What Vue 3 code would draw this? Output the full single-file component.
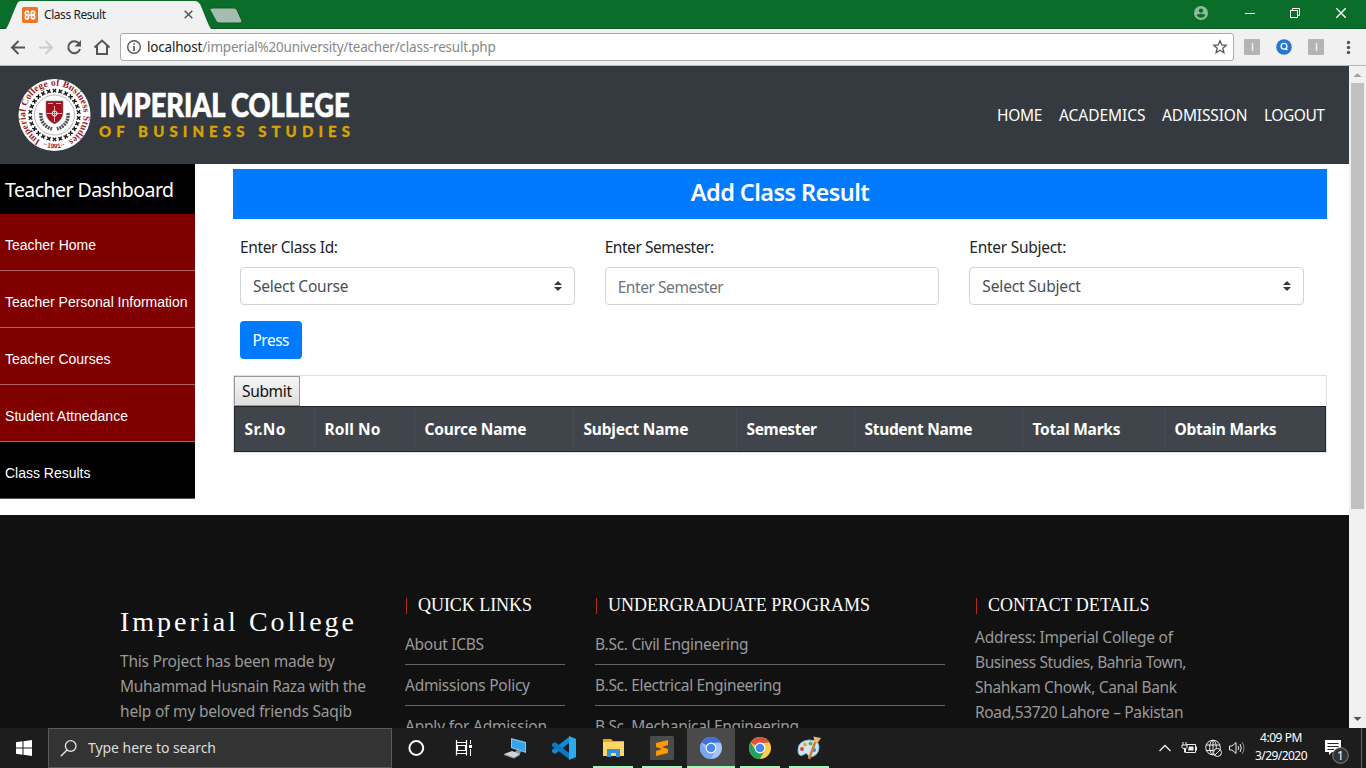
<script setup>
// Spreads or tightens letter spacing so a label takes the given width.
const vFit = {
  mounted(el, { value }) {
    const range = document.createRange()
    range.selectNodeContents(el)
    const w = range.getBoundingClientRect().width
    const n = el.textContent.trim().length
    el.style.letterSpacing = (value - w) / (n - 1) + 'px'
  },
}
const nav = [['HOME', 45.5], ['ACADEMICS', 86.5], ['ADMISSION', 85.5], ['LOGOUT', 61]]
const side = [
  ['Teacher Home', 91], ['Teacher Personal Information', 182.5],
  ['Teacher Courses', 105.5], ['Student Attnedance', 123], ['Class Results', 85.5],
]
const fields = [
  { label: 'Enter Class Id:', lw: 98, text: 'Select Course', tw: 95.5, select: true },
  { label: 'Enter Semester:', lw: 109.5, text: 'Enter Semester', tw: 106, select: false },
  { label: 'Enter Subject:', lw: 97, text: 'Select Subject', tw: 98.5, select: true },
]
const cols = [
  ['Sr.No', 80, 41], ['Roll No', 100, 56], ['Cource Name', 159, 102], ['Subject Name', 163, 105],
  ['Semester', 118, 70.5], ['Student Name', 168, 108], ['Total Marks', 142, 88], ['Obtain Marks', 162, 102],
]
const about = [
  ['This Project has been made by', 215], ['Muhammad Husnain Raza with the', 246],
  ['help of my beloved friends Saqib', 232],
]
const quick = [['About ICBS', 79], ['Admissions Policy', 125], ['Apply for Admission', 142]]
const programs = [
  ['B.Sc. Civil Engineering', 153.5], ['B.Sc. Electrical Engineering', 186.5], ['B.Sc. Mechanical Engineering', 204],
]
const contact = [
  ['Address: Imperial College of', 198], ['Business Studies, Bahria Town,', 211.5],
  ['Shahkam Chowk, Canal Bank', 202], ['Road,53720 Lahore – Pakistan', 208.5],
]
</script>

<template>
  <div class="screen">
    <div class="tabs">
      <svg class="tabshape" width="250" height="29">
        <path d="M6 29C9 25 14 10 17 4Q18 1 21 1H195Q198 1 200 4C203 10 208 25 211 29Z" fill="#f1f1f1" />
        <path d="M212 8H234Q236 8 237 10L242 21Q242 23 240 23H219Q217 23 216 21L210 10Q209 8 212 8Z" fill="#a4bdae" stroke="#0a5a24" />
      </svg>
      <svg class="fav" width="16" height="16" viewBox="0 0 16 16">
        <rect width="16" height="16" rx="2" fill="#ee741d" />
        <path d="M6.500 6.500V5.500Q6.500 4 5 4T3.300 5.800 5 8H11Q12.700 7.600 12.700 5.800T11 4 9.500 5.500V10.500Q9.500 12 11 12T12.700 10.200 11 8M5 8Q3.300 8.400 3.300 10.200T5 12 6.500 10.500V9" fill="none" stroke="#fff" stroke-width="1.700" />
      </svg>
      <span v-fit="62" class="tabname">Class Result</span>
      <svg class="tabx" width="9" height="9"><path d="M.7.7 8.3 8.3M8.3.7.7 8.3" stroke="#5a5a5a" stroke-width="1.6" /></svg>
      <svg class="wins" width="160" height="28" viewBox="0 0 160 28">
        <circle cx="15" cy="13" r="7" fill="#8fbd9c" />
        <circle cx="15" cy="10.6" r="2.2" fill="#0a6e2a" />
        <path d="M10.7 15.6Q11 13.8 15 13.8T19.3 15.6Q17.8 17.8 15 17.8T10.7 15.6" fill="#0a6e2a" />
        <path d="M59 13.5H69" stroke="#fff" />
        <path d="M104.500 10.500H111.500V17.500H104.500ZM106.500 10V8.500H113.500V15.500H112" fill="none" stroke="#fff" />
        <path d="M150.300 8.300 159.700 17.700M159.700 8.300 150.300 17.700" stroke="#fff" stroke-width="1.3" />
      </svg>
    </div>

    <div class="toolbar">
      <svg class="navicons" width="120" height="36" viewBox="0 29 120 36" fill="none" stroke-width="2">
        <path d="M25 47.500H12M18.500 41 12 47.500 18.500 54" stroke="#555" />
        <path d="M39 47.500H52M45.500 41 52 47.500 45.500 54" stroke="#ccc" />
        <path d="M79 43.500A6 6 0 1 0 80 49" stroke="#555" />
        <path d="M81 40V46.500H74.500Z" fill="#555" />
        <path d="M94.500 47.500 102 40.500 109.500 47.500M97 46V54H107V46" stroke="#555" />
      </svg>
      <div class="url">
        <svg width="16" height="16"><circle cx="8" cy="8" r="6.300" fill="none" stroke="#555" stroke-width="1.400" /><path d="M8 7V12M8 4.200V5.800" stroke="#555" stroke-width="1.700" /></svg>
        <span class="addr"><b v-fit="55.500">localhost</b><span v-fit="293.500">/imperial%20university/teacher/class-result.php</span></span>
        <svg class="star" width="16" height="16" viewBox="0 0 16 16"><path d="M8 1.800 9.800 6 14.200 6.300 10.800 9.200 11.900 13.700 8 11.300 4.100 13.700 5.200 9.200 1.800 6.300 6.200 6Z" fill="none" stroke="#555" stroke-width="1.300" /></svg>
      </div>
      <svg width="132" height="36" viewBox="1234 29 132 36">
        <rect x="1244" y="39" width="16" height="16" rx="1" fill="#b4b4b4" /><path d="M1252.500 43V51" stroke="#eee" stroke-width="1.500" />
        <circle cx="1284" cy="47" r="7.800" fill="#2478d0" /><circle cx="1284" cy="46.300" r="2.900" fill="none" stroke="#fff" stroke-width="1.300" /><path d="M1285.500 48 1287.300 50" stroke="#fff" stroke-width="1.500" />
        <rect x="1308" y="39" width="16" height="16" rx="1" fill="#b4b4b4" /><path d="M1316.500 43V51" stroke="#eee" stroke-width="1.500" />
        <g fill="#555"><circle cx="1348.500" cy="42.500" r="1.700" /><circle cx="1348.500" cy="47.500" r="1.700" /><circle cx="1348.500" cy="52.500" r="1.700" /></g>
      </svg>
    </div>

    <div class="view">
      <div class="page">
        <header>
          <svg width="480" height="98" viewBox="0 66 480 98">
            <defs>
              <path id="ring" d="M40.500 140.500A29.200 29.200 0 1 1 68.500 140.500" />
              <path id="low" d="M40 144.500Q54.500 152 69 144.500" />
            </defs>
            <circle cx="54.500" cy="115" r="36" fill="#fff" />
            <text class="seal" fill="#9b1b22"><textPath href="#ring" textLength="154">Imperial College of Business Studies</textPath></text>
            <text class="year" fill="#9b1b22"><textPath href="#low" startOffset="3">··1991··</textPath></text>
            <g transform="translate(54.500 115)" stroke="#111" stroke-width="1.300">
              <path v-for="k in 26" :key="k" d="M-1.700-26 1.700-22.600M1.700-26-1.700-22.600" :transform="`rotate(${k * 360 / 26})`" />
            </g>
            <circle cx="54.500" cy="115" r="20" fill="none" stroke="#999" stroke-width=".7" />
            <path d="M41 113Q40 125 52 129M68 113Q69 125 57 129" fill="none" stroke="#555" stroke-width="3.500" stroke-dasharray="2 .8" />
            <path d="M46 101H63V112Q63 120 54.500 124 46 120 46 112Z" fill="#a5101c" stroke="#777" stroke-width=".6" />
            <path d="M54.500 106V122M47 113.500H62M48 103.500H53M56 103.500H61" stroke="#e4b4b7" />
            <circle cx="54.500" cy="113.500" r="2.500" fill="none" stroke="#fff" />
            <text class="name" x="99.500" y="117" fill="#fff" stroke="#fff" stroke-width=".7" textLength="250" lengthAdjust="spacingAndGlyphs">IMPERIAL COLLEGE</text>
            <text class="sub" x="99" y="137" fill="#d9a300" stroke="#d9a300" stroke-width=".3" textLength="251">OF BUSINESS STUDIES</text>
          </svg>
          <nav><span v-for="n in nav" :key="n[0]" :style="{ width: n[1] + 'px' }"><span v-fit="n[1]">{{ n[0] }}</span></span></nav>
        </header>

        <div class="body">
          <aside>
            <h2><span v-fit="169">Teacher Dashboard</span></h2>
            <div v-for="(s, i) in side" :key="s[0]" :class="['item', { on: i === 4 }]"><span v-fit="s[1]">{{ s[0] }}</span></div>
          </aside>
          <main>
            <h1><span v-fit="179">Add Class Result</span></h1>
            <div class="form">
              <div v-for="f in fields" :key="f.label" class="field">
                <label><span v-fit="f.lw">{{ f.label }}</span></label>
                <div :class="['control', { input: !f.select }]">
                  <span v-fit="f.tw">{{ f.text }}</span>
                  <svg v-if="f.select" width="8" height="10" viewBox="0 0 8 10"><path d="M4 0 8 4H0ZM0 6H8L4 10Z" fill="#343a40" /></svg>
                </div>
              </div>
            </div>
            <div class="press"><span v-fit="37">Press</span></div>
            <div class="table">
              <div class="submit"><span v-fit="50">Submit</span></div>
              <div class="thead">
                <div v-for="c in cols" :key="c[0]" class="th" :style="{ width: c[1] + 'px' }"><span v-fit="c[2]">{{ c[0] }}</span></div>
              </div>
            </div>
          </main>
        </div>

        <footer>
          <div class="about">
            <h3><span v-fit="234">Imperial College</span></h3>
            <p v-for="a in about" :key="a[0]"><span v-fit="a[1]">{{ a[0] }}</span></p>
          </div>
          <div class="quick">
            <h4><span v-fit="114">QUICK LINKS</span></h4>
            <div v-for="q in quick" :key="q[0]" class="link"><span v-fit="q[1]">{{ q[0] }}</span></div>
          </div>
          <div class="programs">
            <h4><span v-fit="262">UNDERGRADUATE PROGRAMS</span></h4>
            <div v-for="q in programs" :key="q[0]" class="link"><span v-fit="q[1]">{{ q[0] }}</span></div>
          </div>
          <div class="contact">
            <h4><span v-fit="161.500">CONTACT DETAILS</span></h4>
            <p v-for="a in contact" :key="a[0]"><span v-fit="a[1]">{{ a[0] }}</span></p>
          </div>
        </footer>
      </div>
      <div class="scroll">
        <svg width="17" height="17"><path d="M4.500 11 8.500 7 12.500 11Z" fill="#a3a3a3" /></svg>
        <div class="thumb"></div>
        <svg width="17" height="17"><path d="M4.500 6 8.500 10 12.500 6Z" fill="#505050" /></svg>
      </div>
    </div>

    <div class="taskbar">
      <div class="start"><svg width="16" height="16"><path d="M0 2.300 6.500 1.300V7.500H0ZM7.500 1.200 16 0V7.500H7.500ZM0 8.500H6.500V14.700L0 13.700ZM7.500 8.500H16V16L7.500 14.800Z" fill="#fff" /></svg></div>
      <div class="search">
        <svg width="17" height="17"><circle cx="10.700" cy="6" r="5.300" fill="none" stroke="#e8e8e8" stroke-width="1.300" /><path d="M7 10 .8 16.200" stroke="#e8e8e8" stroke-width="1.300" /></svg>
        <span v-fit="128">Type here to search</span>
      </div>
      <div class="app"><svg width="24" height="24"><circle cx="11.300" cy="12" r="6.900" fill="none" stroke="#fff" stroke-width="2" /></svg></div>
      <div class="app"><svg width="24" height="24" fill="none" stroke="#fff"><path d="M2.500 4V6.500H12.500V4M2.500 19.500V17.500H12.500V19.500M3.500 9.500H11.500V14.500H3.500ZM2.500 6.500V17.500M12.500 6.500V17.500" stroke-width="1.200" /><path d="M16.500 4V8M16.500 13V20" /><path d="M15 9H18V12H15Z" fill="#fff" stroke="none" /></svg></div>
      <div class="app"><svg width="24" height="24"><path d="M8 2 23 6V17L8 12Z" fill="#88c4ee" /><path d="M9 3.500 22 7V15.500L9 11.300Z" fill="#36a3ed" /><path d="M14 14 18 15 17 18 11 17Z" fill="#8e989f" /><path d="M1 18 9 15 17 18 11 22Z" fill="#cfd4d8" /><path d="M1 18 11 21 17 18V19L11 22.500 1 19Z" fill="#a4abb0" /></svg></div>
      <div class="app"><svg width="24" height="24"><path d="M17 1 17 7 3 18 0 16V14Z" fill="#1389d4" /><path d="M17 23V17L3 6 0 8V10Z" fill="#087ac5" /><path d="M17 0 24 3V21L17 24Z" fill="#2aaaf0" /></svg></div>
      <div class="app open"><svg width="24" height="24"><path d="M2 3H10L12 5H23V8H2Z" fill="#e6a617" /><path d="M2 6H23V20H2Z" fill="#ffd567" /><path d="M6 13H19V21H15V17H10V21H6Z" fill="#348fd9" /></svg></div>
      <div class="app open"><svg width="24" height="24"><rect width="24" height="24" rx="1.500" fill="#4b4b4b" /><path d="M6 7 18 4V9L12 11 18 13V17L6 20V15L12 13 6 11Z" fill="#ff9800" /></svg></div>
      <div class="app open active"><svg width="24" height="24"><circle cx="12" cy="12" r="11" fill="#a4c5fb" /><path d="M12 12 2.500 6.500A11 11 0 0 1 21.500 6.500L12 7Z" fill="#426fda" /><path d="M2.500 6.500A11 11 0 0 0 12 23L16 14.500 7.500 14Z" fill="#7ba4ef" /><circle cx="12" cy="12" r="5.400" fill="#fff" /><circle cx="12" cy="12" r="4.300" fill="#4688f1" /></svg></div>
      <div class="app open"><svg width="24" height="24"><circle cx="12" cy="12" r="11" fill="#ffcd40" /><path d="M12 12 2.500 6.500A11 11 0 0 1 21.500 6.500L12 7Z" fill="#dd5144" /><path d="M2.500 6.500A11 11 0 0 0 12 23L16.500 14.500 7.500 14Z" fill="#1da362" /><circle cx="12" cy="12" r="5.400" fill="#fff" /><circle cx="12" cy="12" r="4.300" fill="#4688f1" /></svg></div>
      <div class="app open"><svg width="26" height="26"><path d="M2 15Q2 6 13 5 23 5 23 12 23 20 15 22 12 23 12 20 11 17 7 20 2 22 2 15Z" fill="#cfe7f5" stroke="#8eb7d2" /><circle cx="6" cy="14" r="2" fill="#df432e" /><circle cx="9" cy="9.500" r="2" fill="#efa51e" /><circle cx="14.500" cy="8.500" r="2" fill="#62b23b" /><circle cx="18" cy="15" r="2" fill="#3887cb" /><path d="M20 5 13 24" stroke="#d47f2d" stroke-width="2.500" /><path d="M18.500 7 17.500 1.500 25 3 21.500 8Z" fill="#e8b67b" /></svg></div>
      <svg class="tray" width="104" height="40" viewBox="1150 728 104 40" fill="none" stroke="#eee">
        <path d="M1159.500 751 1165 745.500 1170.500 751" stroke-width="1.300" />
        <path d="M1186.500 744.500H1195.500V752.500H1185.500V749M1196.500 746.500V750.500M1183 742V745M1186 742V745M1182 745H1187V747.500Q1187 748.500 1184.500 748.500T1182 747.500ZM1184.500 748V752.500" />
        <path d="M1189 746.500H1193.500V750.500H1188Z" fill="#eee" stroke="none" />
        <circle cx="1213" cy="747.500" r="7.300" /><ellipse cx="1213" cy="747.500" rx="3.300" ry="7.300" /><path d="M1206 745H1220M1206 750.500H1214M1213 740V755" />
        <circle cx="1217.500" cy="752.500" r="4" fill="#1d1d1d" /><path d="M1214.800 755.200 1220.200 749.800" />
        <path d="M1229.500 746H1232L1236 742.500V753.500L1232 750H1229.500ZM1238 746Q1239.500 748 1238 750M1240 744Q1242.500 748 1240 752" />
        <path d="M1242 742Q1246 748 1242 754" stroke="#888" />
      </svg>
      <div class="clock"><span v-fit="42.500">4:09 PM</span><span v-fit="52.500">3/29/2020</span></div>
      <svg class="note" width="56" height="40" viewBox="1310 728 56 40">
        <path d="M1325 740H1341V752H1332L1329 755V752H1325Z" fill="#fff" /><path d="M1327.500 743.500H1338.500M1327.500 746.500H1338.500M1327.500 749.500H1334" stroke="#222" />
        <circle cx="1340.500" cy="755.500" r="7.800" fill="#333" stroke="#888" />
        <text x="1340.500" y="760" fill="#fff" text-anchor="middle">1</text>
        <path d="M1361.500 728V768" stroke="#666" />
      </svg>
    </div>
  </div>
</template>

<style>
html, body { overflow: hidden; }
</style>
<style scoped>
* { box-sizing: border-box; }
h1, h2, h3, h4, p { margin: 0; font-weight: 400; }
svg { display: block; flex: none; }
.screen { width: 1366px; height: 768px; display: flex; flex-direction: column; overflow: hidden; background: #fff; font: 15.500px/24px "Noto Sans", "Open Sans", sans-serif; color: #212529; white-space: nowrap; }
.tabs { height: 29px; flex: none; background: #0a6e2a; display: flex; align-items: center; position: relative; border-bottom: 1px solid #0a5a24; }
.tabshape { position: absolute; left: 0; top: 0; }
.fav { position: relative; margin: 2px 0 0 22px; }
.tabname { position: relative; width: 140px; margin: 1px 0 0 6px; font-size: 12px; color: #222; }
.tabx { position: relative; margin-top: 1px; }
.wins { margin: -1px 20px 0 auto; }
.toolbar { height: 37px; flex: none; display: flex; background: #f1f1f1; border-bottom: 1px solid #b6b6b6; }
.url { width: 1114px; height: 28px; margin-top: 4px; border: 1px solid #ababab; border-radius: 3px; background: #fff; display: flex; align-items: center; padding: 0 5px; font-size: 13.500px; color: #888; }
.addr { margin-left: 5px; }
.addr b { font-weight: 400; color: #222; }
.star { margin-left: auto; }
.view { height: 662px; flex: none; display: flex; }
.page { width: 1349px; height: 662px; overflow: hidden; }
.scroll { width: 17px; background: #f1f1f1; display: flex; flex-direction: column; }
.thumb { width: 13px; height: 426px; margin: 0 2px auto; background: #c1c1c1; }
header { height: 98px; background: #343a40; display: flex; justify-content: space-between; }
.seal { font: bold 9.500px "Liberation Serif", serif; }
.year { font: bold 6.500px "Liberation Sans", sans-serif; }
.name { font: 900 32px Lato, sans-serif; }
.sub { font: 900 15px Lato, sans-serif; }
nav { display: flex; gap: 16.500px; padding: 37px 24px 0 0; color: #fff; }
nav > span { flex: none; }
.body { display: flex; height: 351px; }
aside { width: 195px; flex: none; color: #fff; }
aside h2 { height: 50px; background: #000; padding-left: 5px; font-size: 19.500px; line-height: 51px; }
.item { height: 57px; background: maroon; border-bottom: 1px solid #b06161; padding: 4px 0 0 5px; font: 14px/55px "Liberation Sans", sans-serif; }
.item.on { background: #000; border-color: #555; }
main { margin: 5px 0 0 38px; width: 1094px; }
h1 { height: 50px; background: #007bff; color: #fff; text-align: center; font-size: 23.500px; font-weight: 600; line-height: 47px; }
.form { display: flex; gap: 30px; padding: 17px 23px 0 7px; }
.field { flex: 1; }
label { display: block; height: 31px; line-height: 23px; }
.control { height: 38px; border: 1px solid #ced4da; border-radius: 4px; display: flex; justify-content: space-between; align-items: center; padding: 0 12px; color: #495057; }
.control.input { color: #6c757d; padding-top: 2px; }
.press { width: 62px; height: 38px; margin: 16px 0 16px 7px; border-radius: 4px; background: #007bff; color: #fff; line-height: 39px; padding-left: 12.500px; }
.table { border: 1px solid #dee2e6; height: 78px; }
.submit { width: 66px; height: 30px; border: 1px solid #999; background: linear-gradient(#f6f6f6, #dedede); color: #111; line-height: 28px; padding-left: 7px; }
.thead { display: flex; height: 46px; background: #40454b; border: 1px solid #212529; color: #fff; font-weight: 700; }
.th { padding-left: 9.500px; line-height: 44px; flex: none; border-right: 1px solid #454d55; }
.th:last-child { flex: 1; border: 0; }
footer { height: 213px; overflow: hidden; background: #111; color: #999; display: flex; padding: 78px 0 0 120px; line-height: 25px; }
.about { width: 285px; padding-top: 10px; }
h3 { font: 28px/38px "Liberation Serif", serif; color: #fff; margin-bottom: 8px; }
h4 { font: 18px/14px "Liberation Serif", serif; color: #fff; border-left: 1px solid #b52b1c; padding-left: 11px; margin: 5px 0 0 1px; height: 16px; }
.quick { width: 160px; margin-right: 30px; }
.programs { width: 350px; margin-right: 30px; }
.link { height: 41px; border-bottom: 1px solid #666; line-height: 40px; }
h4 + .link { height: 51px; padding-top: 10px; }
.contact h4 { margin-bottom: 11px; }
.taskbar { height: 40px; background: #1d1d1d; display: flex; color: #fff; }
.start { width: 48px; padding: 12px 16px; }
.search { width: 344px; border: 1px solid #5b5b5b; background: #333; display: flex; align-items: center; gap: 11px; padding-left: 11px; font-size: 14px; color: #ddd; }
.app { width: 49px; display: flex; align-items: center; justify-content: center; position: relative; }
.open::after { content: ""; position: absolute; left: 5px; right: 4px; bottom: 0; height: 2px; background: #a8f5bc; }
.active { background: linear-gradient(90deg, transparent 1px, #4a4a4a 1px); }
.active::after { left: 1px; right: 0; }
.tray { margin-left: auto; }
.clock { width: 56px; display: flex; flex-direction: column; align-items: center; font-size: 12px; line-height: 18px; padding: 1px 2px 0 0; }
.note text { font: 12px "Noto Sans", sans-serif; }
</style>
